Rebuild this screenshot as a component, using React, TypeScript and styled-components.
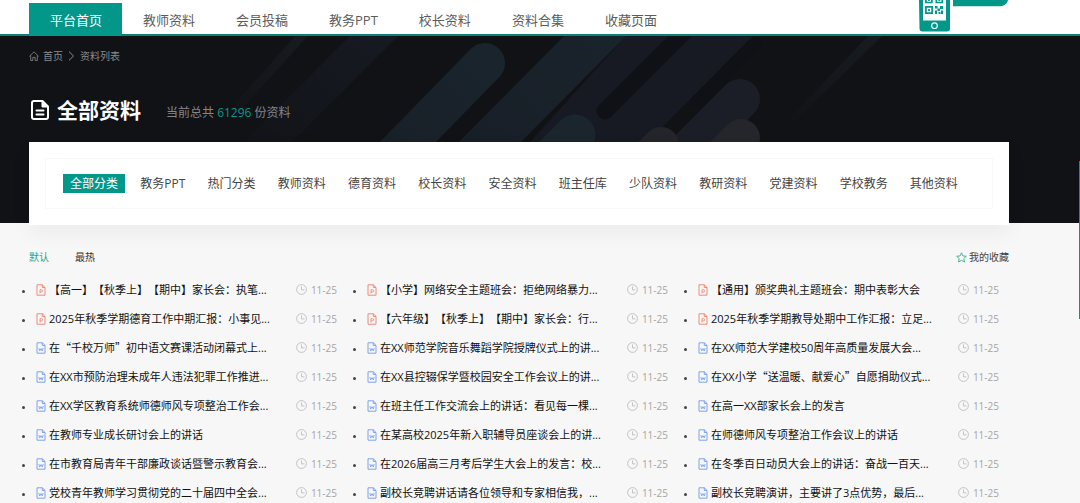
import React from "react";
import styled, { createGlobalStyle } from "styled-components";

const teal = "#029789";
const latin = '"Open Sans"';
const cjk = '"Noto Sans CJK SC"';

const GlobalStyle = createGlobalStyle`
  * { box-sizing: border-box; }
  body {
    margin: 0;
    background: #f7f7f7;
    font-family: ${latin}, ${cjk}, sans-serif;
    font-size: 12px;
    color: #333;
    text-spacing-trim: space-all;
    font-kerning: none;
  }
  a { color: inherit; text-decoration: none; }
  ul { list-style: none; margin: 0; padding: 0; }
  button { font: inherit; border: 0; padding: 0; background: none; cursor: pointer; }
`;

const Header = styled.header`
  display: flex;
  justify-content: space-between;
  align-items: flex-start;
  height: 36px;
  padding: 0 71px 0 29px;
  background: #fff;
  border-bottom: 2px solid #0c8177;
`;

const Nav = styled.nav`
  display: flex;
  margin-top: 3px;
`;

const NavLink = styled.a<{ $active?: boolean }>`
  height: 33px;
  padding: 0 20px 0 21px;
  font-size: 13px;
  line-height: 34px;
  white-space: nowrap;
  color: ${(p) => (p.$active ? "#fff" : "#5c5c5c")};
  background: ${(p) => (p.$active ? teal : "transparent")};
`;

const Hero = styled.section`
  position: relative;
  padding: 12px 71px 0 29px;
  background: #111216;
`;

const Backdrop = styled.svg`
  position: absolute;
  inset: 0;
  width: 100%;
  height: 100%;
`;

const HeroBody = styled.div`
  position: relative;
  display: flow-root;
`;

const Breadcrumb = styled.nav`
  display: flex;
  align-items: center;
  gap: 4px;
  height: 16px;
  font-size: 10px;
  line-height: 16px;
  color: #8b8b8d;
`;

const HeadingRow = styled.div`
  display: flex;
  align-items: center;
  height: 32px;
  margin-top: 30px;
`;

const Heading = styled.h1`
  margin: 0 25px 0 6px;
  font-size: 21px;
  line-height: 30px;
  font-weight: 700;
  color: #fff;
`;

const Total = styled.p`
  margin: 6px 0 0;
  font-size: 12px;
  line-height: 18px;
  color: #85868a;
  strong { font-weight: 400; color: ${teal}; }
`;

const Card = styled.div`
  margin: 16px 0 -2px;
  padding: 16px;
  background: #fff;
  box-shadow: 0 8px 20px rgba(0, 0, 0, 0.05);
`;

const Categories = styled.nav`
  display: flex;
  align-items: center;
  justify-content: space-between;
  height: 51px;
  padding: 0 27px 0 17px;
  border: 1px solid #f8f8f8;
`;

const Category = styled.a<{ $active?: boolean }>`
  padding: 0 7px;
  font-size: 12px;
  line-height: 19px;
  white-space: nowrap;
  color: ${(p) => (p.$active ? "#fff" : "#444")};
  background: ${(p) => (p.$active ? teal : "transparent")};
`;

const Main = styled.main`
  padding: 26px 71px 0 29px;
`;

const Toolbar = styled.div`
  display: flex;
  align-items: center;
  gap: 26px;
  height: 16px;
  font-size: 10px;
`;

const SortButton = styled.button<{ $active?: boolean }>`
  line-height: 16px;
  color: ${(p) => (p.$active ? "#26a383" : "#333")};
`;

const Favourites = styled.a`
  display: flex;
  align-items: center;
  gap: 2px;
  margin-left: auto;
  line-height: 16px;
  color: #444;
`;

const Documents = styled.ul`
  display: grid;
  grid-template-columns: repeat(3, minmax(0, 1fr));
  column-gap: 16px;
  margin: 10px 10px 0 -7px;
`;

const DocumentRow = styled.li`
  display: flex;
  align-items: center;
  height: 29px;
  &::before {
    content: "";
    flex: none;
    width: 3px;
    height: 3px;
    margin: 3px 11px 0 0;
    border-radius: 50%;
    background: #444;
  }
`;

const DocumentLink = styled.a`
  display: flex;
  align-items: center;
  gap: 3px;
  min-width: 0;
  font-size: 11px;
  line-height: 20px;
  white-space: nowrap;
  color: #111;
  svg { flex: none; }
`;

const Quote = styled.span`
  font-family: ${cjk}, sans-serif;
`;

const DateLabel = styled.time`
  display: flex;
  align-items: center;
  gap: 4px;
  margin-left: auto;
  font-size: 10px;
  line-height: 20px;
  color: #a5a5a5;
`;

const SideHandle = styled.div`
  position: fixed;
  top: 161px;
  right: 0;
  width: 1px;
  height: 158px;
  background: ${teal};
`;

const navItems = ["平台首页", "教师资料", "会员投稿", "教务PPT", "校长资料", "资料合集", "收藏页面"];

const categories = [
  "全部分类", "教务PPT", "热门分类", "教师资料", "德育资料", "校长资料", "安全资料",
  "班主任库", "少队资料", "教研资料", "党建资料", "学校教务", "其他资料",
];

type Doc = { title: string; slides?: boolean };

const documents: Doc[] = [
  { title: "【高一】【秋季上】【期中】家长会：执笔...", slides: true },
  { title: "【小学】网络安全主题班会：拒绝网络暴力...", slides: true },
  { title: "【通用】颁奖典礼主题班会：期中表彰大会", slides: true },
  { title: "2025年秋季学期德育工作中期汇报：小事见...", slides: true },
  { title: "【六年级】【秋季上】【期中】家长会：行...", slides: true },
  { title: "2025年秋季学期教导处期中工作汇报：立足...", slides: true },
  { title: "在“千校万师”初中语文赛课活动闭幕式上..." },
  { title: "在XX师范学院音乐舞蹈学院授牌仪式上的讲..." },
  { title: "在XX师范大学建校50周年高质量发展大会..." },
  { title: "在XX市预防治理未成年人违法犯罪工作推进..." },
  { title: "在XX县控辍保学暨校园安全工作会议上的讲..." },
  { title: "在XX小学“送温暖、献爱心”自愿捐助仪式..." },
  { title: "在XX学区教育系统师德师风专项整治工作会..." },
  { title: "在班主任工作交流会上的讲话：看见每一棵..." },
  { title: "在高一XX部家长会上的发言" },
  { title: "在教师专业成长研讨会上的讲话" },
  { title: "在某高校2025年新入职辅导员座谈会上的讲..." },
  { title: "在师德师风专项整治工作会议上的讲话" },
  { title: "在市教育局青年干部廉政谈话暨警示教育会..." },
  { title: "在2026届高三月考后学生大会上的发言：校..." },
  { title: "在冬季百日动员大会上的讲话：奋战一百天..." },
  { title: "党校青年教师学习贯彻党的二十届四中全会..." },
  { title: "副校长竞聘讲话请各位领导和专家相信我，..." },
  { title: "副校长竞聘演讲，主要讲了3点优势，最后..." },
];

/* Curly quotes take the full-width forms of the Chinese font. */
const Title = ({ text }: { text: string }) => (
  <span>
    {text.split(/([“”])/).map((part, i) =>
      part === "“" || part === "”" ? <Quote key={i}>{part}</Quote> : part
    )}
  </span>
);

const FileIcon = ({ slides }: { slides?: boolean }) => (
  <svg width="10" height="12" viewBox="0 0 10 12" fill="none" stroke={slides ? "#f08a78" : "#7da3f2"} aria-hidden="true">
    <path d="M1 .8h5.4L9 3.4v7.8H1z" />
    <path d="M6.3.8v2.7H9" />
    {slides ? <path d="M4 9.4V5.7h1.5a1.1 1.1 0 0 1 0 2.2H4" strokeWidth=".9" /> : <path d="M2.8 6l.9 3L5 6.6 6.300 9l.9-3" strokeWidth=".9" />}
  </svg>
);

const ClockIcon = () => (
  <svg width="11" height="11" viewBox="0 0 11 11" fill="none" stroke="#bdbdbd" aria-hidden="true">
    <circle cx="5.5" cy="5.5" r="4.900" strokeWidth=".9" />
    <path d="M5.500 2.400v3.500h2.900" strokeWidth=".9" />
  </svg>
);

const HomeIcon = () => (
  <svg width="10" height="10" viewBox="0 0 10 10" fill="none" stroke="#7d7d80" strokeWidth=".9" aria-hidden="true">
    <path d="M.4 5.300 5 .8l4.600 4.500M1.700 4.300v5.200h2.100V6.400h2.400v3.100h2.100V4.300" />
  </svg>
);

const ChevronIcon = () => (
  <svg width="9" height="10" viewBox="0 0 9 10" fill="none" stroke="#8b8b8d" aria-hidden="true">
    <path d="M2 .6 6.500 5 2 9.400" />
  </svg>
);

const StarIcon = () => (
  <svg width="11" height="11" viewBox="0 0 11 11" fill="none" stroke="#3cab90" strokeWidth=".9" strokeLinejoin="round" aria-hidden="true">
    <path d="m5.500.8 1.400 3.100 3.400.4-2.500 2.300.7 3.400-3-1.700-3 1.700.7-3.400L.7 4.300l3.400-.4z" />
  </svg>
);

const DocumentIcon = () => (
  <svg width="22" height="22" viewBox="0 0 22 22" fill="none" stroke="#fff" strokeWidth="2" strokeLinejoin="round" strokeLinecap="round" aria-hidden="true">
    <path d="M5 2h8.500L19 7.500V18a2 2 0 0 1-2 2H5a2 2 0 0 1-2-2V4a2 2 0 0 1 2-2z" />
    <path d="M13 2.500V8h5.500z" fill="#fff" strokeWidth="1" />
    <path d="M7.500 11.500h7M7.500 15.500h7" />
  </svg>
);

const PhoneBadge = () => (
  <svg width="90" height="32" viewBox="0 0 90 32" aria-hidden="true">
    <path d="M0 0h31v28.500a3 3 0 0 1-3 3H3.500a3 3 0 0 1-3-3z" fill={teal} />
    <path d="M4 0h23v20.500H4z" fill="#fff" />
    <g fill="none" stroke={teal} strokeWidth="1.700">
      <path d="M6.900-3.500h6v6h-6zM17.300-3.500h6v6h-6zM6.900 6.800h6.200v6.400H6.900z" />
    </g>
    <path d="M9.100-.5h1.800v1.500H9.100zM19.400-.5h1.800v1.500h-1.800zM9.100 9.100h1.800v1.800H9.100zM16 6h2.500v2.500H16zM21 6h3v3h-3zM18.500 8.500H21V11h-2.500zM16 10.500h2v3.500h-2zM19.500 12h2v2h-2zM22 10.500h2V14h-2z" fill={teal} />
    <circle cx="15.500" cy="25.700" r="2.800" fill="none" stroke="#e8fffb" strokeWidth="1.200" />
    <path d="M34 0h55c-1 4-4 6.200-8 6.200H34z" fill={teal} />
  </svg>
);

const HeroBackdrop = () => (
  <Backdrop viewBox="0 0 1080 187" preserveAspectRatio="xMidYMin slice" aria-hidden="true">
    <defs>
      <linearGradient id="streak" x1="0" y1="1" x2="1" y2="0">
        <stop offset="0" stopColor="#111216" />
        <stop offset="1" stopColor="#171c20" />
      </linearGradient>
      <linearGradient id="band" x1="0" y1="1" x2="1" y2="0">
        <stop offset="0" stopColor="#181e27" />
        <stop offset="1" stopColor="#1a242c" />
      </linearGradient>
      <linearGradient id="wide" x1="0" y1="1" x2="1" y2="0">
        <stop offset="0" stopColor="#111216" />
        <stop offset="1" stopColor="#161a22" />
      </linearGradient>
    </defs>
    <path d="M300-5h12L232 84h-12z" fill="url(#streak)" />
    <path d="M355-5h48L262 136h-48z" fill="url(#wide)" />
    <path d="M626 0h127L604 150H490z" fill="#171a23" />
    <g strokeLinecap="round" fill="none">
      <path d="M485 27 365 150" stroke="url(#band)" strokeWidth="40" />
      <path d="M620-25 470 126" stroke="url(#band)" strokeWidth="44" />
      <path d="M690-10 605 75" stroke="#101116" strokeWidth="17" />
      <path d="M755 8 697 66" stroke="#101116" strokeWidth="13" />
      <path d="M740 63 660 143" stroke="#1b1e27" strokeWidth="40" />
      <path d="M575 99 535 139" stroke="#1b252e" strokeWidth="41" />
      <path d="M661 109 630 140" stroke="#24252a" strokeWidth="36" />
      <path d="M741 102 710 133" stroke="#25262b" strokeWidth="38" />
    </g>
    <path d="M868 0h14L790 90h-8z" fill="url(#streak)" />
  </Backdrop>
);

export default function App() {
  return (
    <>
      <GlobalStyle />
      <Header>
        <Nav>
          {navItems.map((name, i) => (
            <NavLink key={name} href="#" $active={i === 0}>{name}</NavLink>
          ))}
        </Nav>
        <PhoneBadge />
      </Header>
      <Hero>
        <HeroBackdrop />
        <HeroBody>
          <Breadcrumb>
            <HomeIcon />
            <a href="#">首页</a>
            <ChevronIcon />
            <a href="#">资料列表</a>
          </Breadcrumb>
          <HeadingRow>
            <DocumentIcon />
            <Heading>全部资料</Heading>
            <Total>当前总共 <strong>61296</strong> 份资料</Total>
          </HeadingRow>
          <Card>
            <Categories>
              {categories.map((name, i) => (
                <Category key={name} href="#" $active={i === 0}>{name}</Category>
              ))}
            </Categories>
          </Card>
        </HeroBody>
      </Hero>
      <Main>
        <Toolbar>
          <SortButton type="button" $active>默认</SortButton>
          <SortButton type="button">最热</SortButton>
          <Favourites href="#"><StarIcon />我的收藏</Favourites>
        </Toolbar>
        <Documents>
          {documents.map((doc) => (
            <DocumentRow key={doc.title}>
              <DocumentLink href="#">
                <FileIcon slides={doc.slides} />
                <Title text={doc.title} />
              </DocumentLink>
              <DateLabel><ClockIcon />11-25</DateLabel>
            </DocumentRow>
          ))}
        </Documents>
      </Main>
      <SideHandle />
    </>
  );
}
